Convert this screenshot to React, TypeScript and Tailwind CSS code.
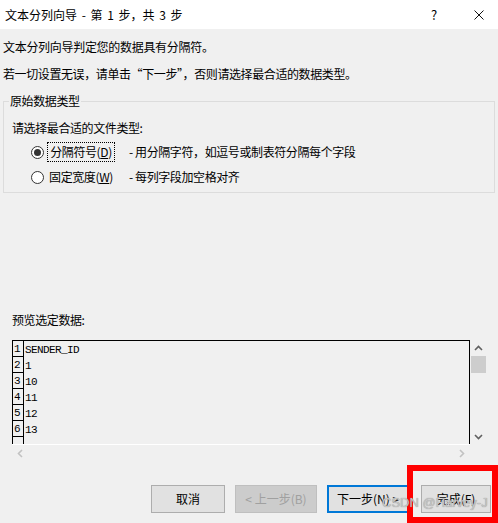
import React from 'react';

const rows = ['SENDER_ID', '1', '10', '11', '12', '13', ''];

const Radio = ({ checked }: { checked?: boolean }) => (
  <span className="w-[13px] h-[13px] rounded-full border border-[#333333] bg-white flex items-center justify-center shrink-0">
    {checked && <span className="w-[7px] h-[7px] rounded-full bg-[#333333]" />}
  </span>
);

const Chevron = ({ dir, color }: { dir: 'up' | 'down' | 'left' | 'right'; color: string }) => {
  const pts = {
    up: '1,6 4.5,2.5 8,6',
    down: '1,3 4.5,6.5 8,3',
    left: '6,1 2.5,4.5 6,8',
    right: '3,1 6.5,4.5 3,8',
  }[dir];
  return (
    <svg width="9" height="9" viewBox="0 0 9 9">
      <polyline points={pts} fill="none" stroke={color} strokeWidth="1.6" />
    </svg>
  );
};

const TextWizard = () => {
  return (
    <div className="relative w-[498px] h-[523px] overflow-hidden bg-[#f0f0f0] text-[12px] leading-[16px] text-black font-['Noto_Sans_CJK_SC','Microsoft_YaHei',sans-serif]">
      {/* Title bar */}
      <div className="h-[29px] bg-white flex items-center">
        <span className="pl-[5px] whitespace-pre [word-spacing:2px]">文本分列向导 - 第 1 步，共 3 步</span>
        <span className="ml-auto w-[10px] text-center text-[13px] mr-[35px]">?</span>
        <span className="mr-[14px]">
          <svg width="10" height="10" viewBox="0 0 10 10">
            <path d="M0.5 0.5 L9.5 9.5 M9.5 0.5 L0.5 9.5" stroke="#111" strokeWidth="1" />
          </svg>
        </span>
      </div>

      <div className="flex flex-col">
        <div className="mt-[10px] pl-[3px] h-[16px] tracking-[-0.3px]">文本分列向导判定您的数据具有分隔符。</div>
        <div className="mt-[11px] pl-[3px] h-[16px] tracking-[-0.4px]">若一切设置无误，请单击“下一步”，否则请选择最合适的数据类型。</div>

        {/* Group box */}
        <fieldset className="mt-[11px] mx-[3px] border border-[#dcdcdc] pt-[11px] pb-[5px]">
          <legend className="ml-[5px] px-[1px] h-[16px] tracking-[-0.4px]">原始数据类型</legend>
          <div className="pl-[8px] h-[16px] tracking-[-0.4px]">请选择最合适的文件类型:</div>
          <div className="mt-[6px] h-[20px] flex items-center pl-[27px]">
            <Radio checked />
            <span className="ml-[3px] h-[20px] w-[68px] flex items-center justify-center border border-dotted border-black tracking-[-0.4px]">
              分隔符号(<span className="underline">D</span>)
            </span>
            <span className="ml-[14px] tracking-[-0.4px]">- 用分隔字符，如逗号或制表符分隔每个字段</span>
          </div>
          <div className="mt-[5px] h-[20px] flex items-center pl-[27px]">
            <Radio />
            <span className="ml-[3px] h-[20px] w-[68px] flex items-center justify-center tracking-[-0.4px]">
              固定宽度(<span className="underline">W</span>)
            </span>
            <span className="ml-[14px] tracking-[-0.4px]">- 每列字段加空格对齐</span>
          </div>
        </fieldset>

        <div className="mt-[119px] pl-[12px] h-[16px] tracking-[-0.4px]">预览选定数据:</div>

        {/* Preview */}
        <div className="mt-[12px] ml-[12px] flex">
          <div className="w-[458px] flex flex-col">
            <div className="h-[104px] border-t border-x border-black overflow-hidden flex flex-col font-['Liberation_Mono',monospace] text-[11px] tracking-[-0.6px]">
              {rows.map((r, i) => (
                <div key={i} className="h-[16px] shrink-0 flex">
                  <div className="w-[11px] h-[16px] border-r border-b border-black flex items-end pl-[1px] leading-[13px]">
                    {i < 6 ? i + 1 : ''}
                  </div>
                  <div className="pl-[1px] pt-[2px] leading-[14px]">{r}</div>
                </div>
              ))}
            </div>
            <div className="h-[17px] border-t border-white flex items-center justify-between px-[4px]">
              <Chevron dir="left" color="#c2c2c2" />
              <Chevron dir="right" color="#c2c2c2" />
            </div>
          </div>
          <div className="w-[17px] h-[104px] flex flex-col items-center">
            <div className="h-[16px] flex items-center justify-center">
              <Chevron dir="up" color="#606060" />
            </div>
            <div className="w-[15px] h-[17px] bg-[#cdcdcd]" />
            <div className="mt-auto h-[16px] flex items-center justify-center">
              <Chevron dir="down" color="#606060" />
            </div>
          </div>
        </div>

        {/* Buttons */}
        <div className="mt-[24px] flex h-[28px]">
          <button className="ml-[151px] w-[74px] h-[28px] bg-[#e1e1e1] border border-[#adadad]">取消</button>
          <button className="ml-[10px] w-[82px] h-[28px] bg-[#cccccc] border border-[#bfbfbf] text-[#a0a0a0]">&lt; 上一步(B)</button>
          <button className="ml-[10px] w-[82px] h-[28px] bg-[#e1e1e1] border-2 border-[#0078d7]">下一步(N) &gt;</button>
          <button className="ml-[12px] w-[70px] h-[28px] bg-[#e1e1e1] border border-[#adadad]">完成(F)</button>
        </div>
      </div>

      {/* Annotation overlay */}
      <div className="absolute left-[407px] top-[465px] w-[91px] h-[58px] border-[6px] border-[#ff0000]" />
      <div className="absolute left-[382px] top-[495px] text-[13px] leading-[16px] text-[#c4c4c4] font-['Liberation_Sans',sans-serif] [text-shadow:0_0_1px_#8a8a8a]">
        CSDN @Harvey-J
      </div>
    </div>
  );
};

export default function App() {
  return <TextWizard />;
}
